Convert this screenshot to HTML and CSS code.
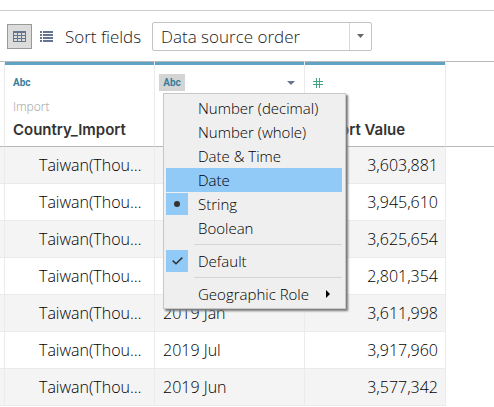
FILE: index.html
```html
<!DOCTYPE html>
<html lang="en">
<head>
<meta charset="utf-8">
<title>Data source</title>
<link rel="stylesheet" href="styles.css">
</head>
<body>
<div class="toolbar">
  <button class="view-button view-button-active" type="button" aria-label="Grid view">
    <svg width="13" height="11" viewBox="0 0 13 11" shape-rendering="crispEdges"><path fill="#66758f" fill-rule="evenodd" d="M0 0h13v11H0zM1 2v2h3V2zM5 2v2h3V2zM9 2v2h3V2zM1 5v2h3V5zM5 5v2h3V5zM9 5v2h3V5zM1 8v2h3V8zM5 8v2h3V8zM9 8v2h3V8z"/></svg>
  </button>
  <button class="view-button" type="button" aria-label="List view">
    <svg width="13" height="11" viewBox="0 0 13 11" shape-rendering="crispEdges"><path fill="#66758f" d="M0 0h2v2H0zM3 0h10v2H3zM0 3h2v2H0zM3 3h10v2H3zM0 6h2v2H0zM3 6h10v2H3zM0 9h2v2H0zM3 9h10v2H3z"/></svg>
  </button>
  <label class="sort-label" for="sort">Sort fields</label>
  <div class="select-box">
    <select id="sort"><option>Data source order</option></select>
    <span class="select-arrow"><svg width="7" height="4" viewBox="0 0 7 4"><path fill="#666" d="M0 0h7L3.5 4z"/></svg></span>
  </div>
</div>

<table class="grid">
  <colgroup><col class="col-gutter"><col class="col-field"><col class="col-field"><col class="col-value"><col></colgroup>
  <thead>
    <tr>
      <td class="gutter"></td>
      <th scope="col">
        <div class="field-head">
          <div class="field-type"><span class="badge">Abc</span></div>
          <div class="field-source">Import</div>
          <div class="field-name">Country_Import</div>
        </div>
      </th>
      <th scope="col">
        <div class="field-head">
          <div class="field-type">
            <button class="badge badge-active" type="button" aria-haspopup="menu" aria-expanded="true">Abc</button>
            <svg width="8" height="4" viewBox="0 0 8 4"><path fill="#66758f" d="M0 0h8L4 4z"/></svg>
          </div>
          <div class="menu" role="menu">
            <button type="button" role="menuitemradio" aria-checked="false"><span class="mark"></span>Number (decimal)</button>
            <button type="button" role="menuitemradio" aria-checked="false"><span class="mark"></span>Number (whole)</button>
            <button type="button" role="menuitemradio" aria-checked="false"><span class="mark"></span>Date &amp; Time</button>
            <button class="current" type="button" role="menuitemradio" aria-checked="false"><span class="mark"></span>Date</button>
            <button type="button" role="menuitemradio" aria-checked="true"><span class="mark mark-on"><svg width="6" height="6" viewBox="0 0 6 6"><circle cx="3" cy="3" r="3" fill="#333"/></svg></span>String</button>
            <button type="button" role="menuitemradio" aria-checked="false"><span class="mark"></span>Boolean</button>
            <hr>
            <button type="button" role="menuitemcheckbox" aria-checked="true"><span class="mark mark-on"><svg width="11" height="8" viewBox="0 0 11 8"><path fill="none" stroke="#333" stroke-width="1.5" d="M.7 3.6l3.3 3.2L10.3.6"/></svg></span>Default</button>
            <hr>
            <button type="button" role="menuitem" aria-haspopup="menu"><span class="mark"></span>Geographic Role<svg class="submenu" width="4" height="8" viewBox="0 0 4 8"><path d="M0 0l4 4-4 4z"/></svg></button>
          </div>
        </div>
      </th>
      <th scope="col">
        <div class="field-head">
          <div class="field-type"><svg class="number-icon" width="10" height="10" viewBox="0 0 10 10" shape-rendering="crispEdges"><path fill="#46a588" d="M3 0h1v10H3zM6 0h1v10H6zM0 3h10v1H0zM0 6h10v1H0z"/></svg></div>
          <div class="field-name">Import Value</div>
        </div>
      </th>
      <td class="rest"></td>
    </tr>
  </thead>
  <tbody>
    <tr><td></td><td class="country">Taiwan(Thou…</td><td></td><td class="number">3,603,881</td><td></td></tr>
    <tr><td></td><td class="country">Taiwan(Thou…</td><td></td><td class="number">3,945,610</td><td></td></tr>
    <tr><td></td><td class="country">Taiwan(Thou…</td><td></td><td class="number">3,625,654</td><td></td></tr>
    <tr><td></td><td class="country">Taiwan(Thou…</td><td></td><td class="number">2,801,354</td><td></td></tr>
    <tr><td></td><td class="country">Taiwan(Thou…</td><td>2019 Jan</td><td class="number">3,611,998</td><td></td></tr>
    <tr><td></td><td class="country">Taiwan(Thou…</td><td>2019 Jul</td><td class="number">3,917,960</td><td></td></tr>
    <tr><td></td><td class="country">Taiwan(Thou…</td><td>2019 Jun</td><td class="number">3,577,342</td><td></td></tr>
  </tbody>
</table>
</body>
</html>
```
FILE: styles.css
```css
* { box-sizing: border-box; }

body {
  margin: 0;
  padding-top: 10px;
  background: #fff;
  color: #000;
  font-family: "Open Sans", "Noto Sans", sans-serif;
  font-size: 16px;
  font-weight: 340;
}

button, select { font: inherit; color: inherit; margin: 0; }
svg { display: block; }

.toolbar {
  display: flex;
  align-items: center;
  height: 51px;
  padding: 0 7px;
  border-top: 1px solid #ccc;
}

.view-button {
  display: flex;
  align-items: center;
  justify-content: center;
  width: 25px;
  height: 25px;
  padding: 0;
  border: 1px solid transparent;
  background: none;
}
.view-button-active { border-color: #999; background: #dcdcdc; }
.view-button + .view-button { margin-left: 2px; }

.sort-label {
  width: 79px;
  margin-left: 6px;
  color: #222;
  font-size: 17px;
  white-space: nowrap;
}

.select-box {
  display: grid;
  grid-template-columns: 1fr 22px;
  width: 220px;
  height: 29px;
  margin-left: 8px;
  border: 1px solid #c4c4c4;
  border-radius: 2px;
}
.select-box select {
  grid-area: 1 / 1 / 2 / 3;
  appearance: none;
  padding: 0 24px 0 8px;
  border: 0;
  background: none;
  color: #222;
  font-size: 17px;
}
.select-arrow {
  grid-area: 1 / 2;
  display: flex;
  align-items: center;
  justify-content: center;
  border-left: 1px solid #d9d9d9;
  pointer-events: none;
}

.grid {
  width: 100%;
  table-layout: fixed;
  border-collapse: separate;
  border-spacing: 0;
}
.col-gutter { width: 5px; }
.col-field { width: 150px; }
.col-value { width: 141px; }

.grid th, .grid td { padding: 0; border-right: 1px solid #ebebeb; }
.grid tr > :last-child { border-right: 0; }

thead th, thead td {
  height: 86px;
  border-top: 1px solid #b8b8b8;
  border-bottom: 1px solid #b8b8b8;
  text-align: left;
  vertical-align: top;
}

.field-head {
  position: relative;
  display: flex;
  flex-direction: column;
  height: 84px;
  padding: 9px 9px 5px 4px;
  border-top: 3px solid #5fa3c7;
}
.field-type {
  display: flex;
  align-items: center;
  justify-content: space-between;
  height: 17px;
  margin-bottom: auto;
}
.badge {
  width: 26px;
  height: 17px;
  padding: 0 4px;
  border: 0;
  background: none;
  color: #387e9c;
  font: bold 10px/17px Roboto, sans-serif;
}
.badge-active { background: #d4d4d4; }
.number-icon { margin-left: 4px; }
.field-source {
  padding-left: 4px;
  color: #999;
  font-size: 12px;
  font-weight: 340;
  line-height: 16px;
}
.field-name {
  padding-left: 4px;
  margin-top: 4px;
  color: #333;
  font-family: Inter, sans-serif;
  font-size: 15px;
  font-weight: 600;
  line-height: 22px;
}

tbody td {
  height: 37px;
  font-size: 16px;
  line-height: 22px;
  white-space: nowrap;
}
.grid tbody td { padding: 0 8px; border-bottom: 1px solid #ebebeb; }
.grid tbody td:first-child { padding: 0; }
.grid tbody td:last-child { border-bottom: 0; }
tbody tr:nth-child(odd) td:not(:last-child) { background: #f4f4f4; }
.grid tbody .country { padding: 0 8px 0 34px; }
.grid tbody .number { padding-right: 7px; text-align: right; }

.menu {
  position: absolute;
  top: 28px;
  left: 8px;
  z-index: 1;
  width: 183px;
  padding: 2px 3px 2px 2px;
  border: 1px solid #c8c8c8;
  background: #efefef;
  box-shadow: 2px 2px 2px #777;
  color: #000;
  font-size: 15px;
  font-weight: 340;
}
.menu button {
  display: flex;
  align-items: center;
  width: 100%;
  height: 24px;
  padding: 0;
  border: 0;
  background: none;
  line-height: 24px;
  text-align: left;
}
.menu .current { background: #91c9f7; }
.menu hr {
  height: 1px;
  margin: 4px 0 4px 28px;
  border: 0;
  background: #d5d5d5;
}
.mark {
  display: flex;
  align-items: center;
  justify-content: center;
  width: 22px;
  height: 22px;
  margin-right: 10px;
}
.mark-on { background: #91c9f7; }
.submenu { margin: 0 12px 0 auto; }
```
